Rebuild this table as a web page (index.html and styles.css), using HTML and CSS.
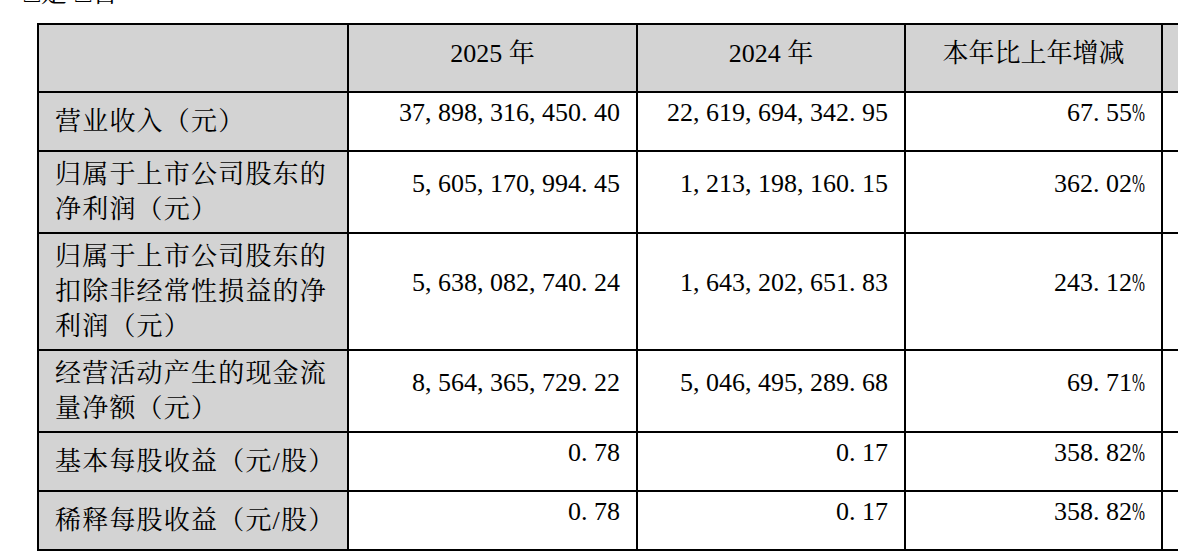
FILE: index.html
```html
<!DOCTYPE html>
<html lang="zh-CN">
<head>
<meta charset="utf-8">
<title>主要会计数据</title>
<link rel="stylesheet" href="styles.css">
</head>
<body>
<div class="note">□是 □否</div>
<table class="fin">
  <colgroup>
    <col class="c1"><col class="c2"><col class="c3"><col class="c4"><col class="c5">
  </colgroup>
  <thead>
    <tr class="head">
      <th></th>
      <th>2025 年</th>
      <th>2024 年</th>
      <th>本年比上年增减</th>
      <th></th>
    </tr>
  </thead>
  <tbody>
    <tr>
      <td class="label">营业收入（元）</td>
      <td class="num">37<span class="p">,</span>898<span class="p">,</span>316<span class="p">,</span>450<span class="p">.</span>40</td>
      <td class="num">22<span class="p">,</span>619<span class="p">,</span>694<span class="p">,</span>342<span class="p">.</span>95</td>
      <td class="num">67<span class="p">.</span>55<span class="pc">%</span></td>
      <td class="blank"></td>
    </tr>
    <tr>
      <td class="label">归属于上市公司股东的净利润（元）</td>
      <td class="num">5<span class="p">,</span>605<span class="p">,</span>170<span class="p">,</span>994<span class="p">.</span>45</td>
      <td class="num">1<span class="p">,</span>213<span class="p">,</span>198<span class="p">,</span>160<span class="p">.</span>15</td>
      <td class="num">362<span class="p">.</span>02<span class="pc">%</span></td>
      <td class="blank"></td>
    </tr>
    <tr>
      <td class="label">归属于上市公司股东的扣除非经常性损益的净利润（元）</td>
      <td class="num">5<span class="p">,</span>638<span class="p">,</span>082<span class="p">,</span>740<span class="p">.</span>24</td>
      <td class="num">1<span class="p">,</span>643<span class="p">,</span>202<span class="p">,</span>651<span class="p">.</span>83</td>
      <td class="num">243<span class="p">.</span>12<span class="pc">%</span></td>
      <td class="blank"></td>
    </tr>
    <tr>
      <td class="label">经营活动产生的现金流量净额（元）</td>
      <td class="num">8<span class="p">,</span>564<span class="p">,</span>365<span class="p">,</span>729<span class="p">.</span>22</td>
      <td class="num">5<span class="p">,</span>046<span class="p">,</span>495<span class="p">,</span>289<span class="p">.</span>68</td>
      <td class="num">69<span class="p">.</span>71<span class="pc">%</span></td>
      <td class="blank"></td>
    </tr>
    <tr>
      <td class="label">基本每股收益（元/股）</td>
      <td class="num">0<span class="p">.</span>78</td>
      <td class="num">0<span class="p">.</span>17</td>
      <td class="num">358<span class="p">.</span>82<span class="pc">%</span></td>
      <td class="blank"></td>
    </tr>
    <tr>
      <td class="label">稀释每股收益（元/股）</td>
      <td class="num">0<span class="p">.</span>78</td>
      <td class="num">0<span class="p">.</span>17</td>
      <td class="num">358<span class="p">.</span>82<span class="pc">%</span></td>
      <td class="blank"></td>
    </tr>
  </tbody>
</table>
</body>
</html>
```

FILE: styles.css
```css
html, body {
  margin: 0;
  padding: 0;
  background: #ffffff;
  overflow: hidden;
}

body {
  width: 1178px;
  height: 560px;
  font-family: "Liberation Serif", "Noto Serif CJK SC", "Noto Sans CJK SC", serif;
  font-size: 26px;
  color: #000000;
}

.note {
  line-height: 35px;
  height: 35px;
  margin-top: -24px;
  margin-bottom: 12px;
  padding-left: 24px;
  letter-spacing: 1px;
  white-space: nowrap;
}

.fin {
  border-collapse: collapse;
  table-layout: fixed;
  width: 1324px;
  margin-left: 37px;
}

.c1 { width: 310px; }
.c2 { width: 289px; }
.c3 { width: 268px; }
.c4 { width: 257px; }
.c5 { width: 200px; }

.fin th,
.fin td {
  border: 2px solid #000000;
  line-height: 35px;
  font-weight: normal;
  padding: 5px 16px;
  vertical-align: middle;
}

.fin tr {
  height: 59px;
}

.fin tr.head {
  height: 68px;
}

.fin th {
  background: #d3d3d3;
  text-align: center;
  padding-bottom: 15px;
}

.fin td.label {
  background: #d3d3d3;
  text-align: left;
  letter-spacing: 1.2px;
  padding-left: 16px;
  padding-right: 8px;
}

.fin td.num {
  text-align: right;
  white-space: nowrap;
  padding-top: 0;
  padding-bottom: 18px;
}

.p {
  display: inline-block;
  width: 0.5em;
  text-align: left;
}

.pc {
  display: inline-block;
  transform: scaleX(0.6);
  transform-origin: left center;
  margin-right: -0.333em;
}
```
